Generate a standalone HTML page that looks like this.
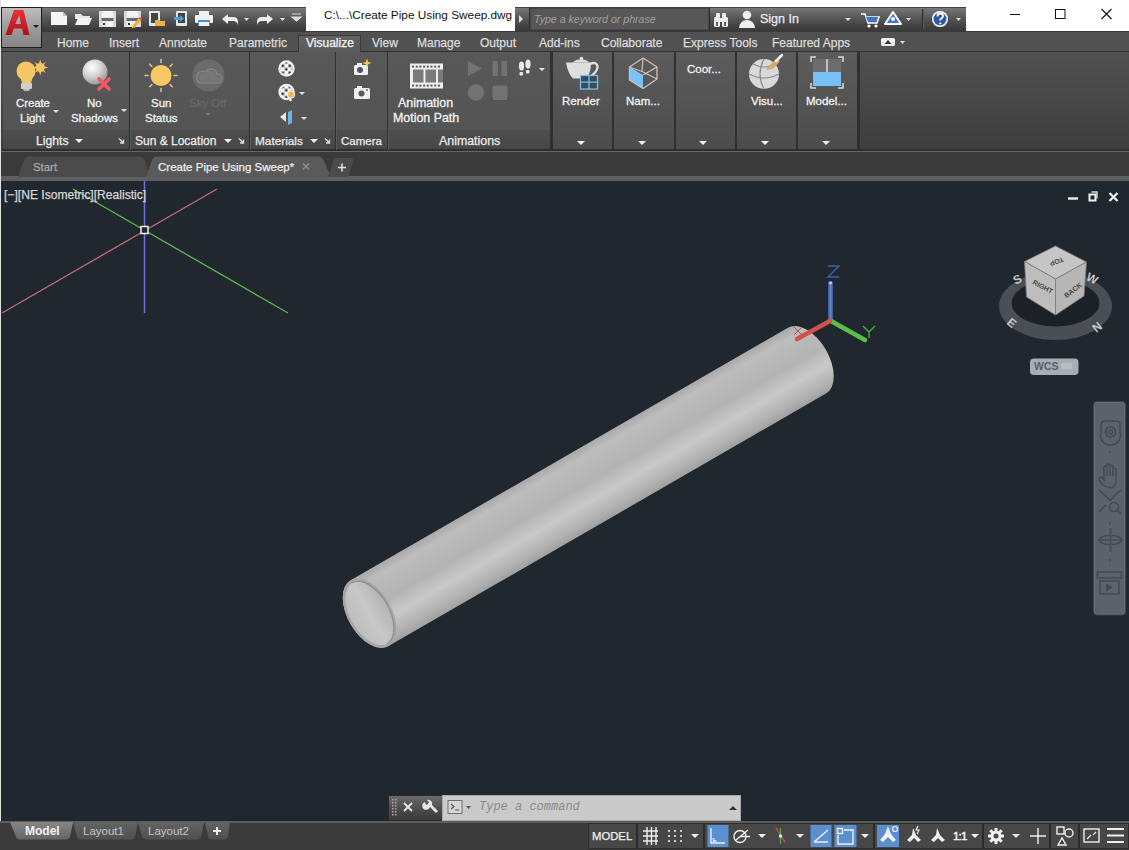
<!DOCTYPE html>
<html><head><meta charset="utf-8">
<style>
*{margin:0;padding:0;box-sizing:border-box}
html,body{width:1129px;height:850px;overflow:hidden;background:#fff;font-family:"Liberation Sans",sans-serif;position:relative}
.a{position:absolute}
.t{position:absolute;white-space:nowrap;color:#ececec;font-size:12px;line-height:14px;-webkit-text-stroke:0.25px currentColor}
svg{position:absolute;overflow:visible}
#qat{left:0;top:7px;width:306px;height:24px;background:linear-gradient(#787878,#555 45%,#383838 100%);border-top:1px solid #444}
#appbtn{left:1px;top:7px;width:41px;height:41px;background:linear-gradient(#bdbdbd,#9c9c9c 50%,#858585);border:1px solid #1e1e1e}
#search{left:515px;top:7px;width:451px;height:24px;background:linear-gradient(#787878,#555 45%,#383838);border-top:1px solid #444}
#tabs{left:0;top:31px;width:1129px;height:22px;background:#515151;border-top:1px solid #3a3a3a;border-bottom:2px solid #333}
#acttab{left:298px;top:35px;width:63px;height:18px;background:linear-gradient(#626262,#5a5a5a);border:1px solid #3a3a3a;border-bottom:none}
#ribbon{left:0;top:52px;width:1129px;height:100px;background:linear-gradient(#505050,#3e3e3e);border-bottom:1px solid #5a5a5a}
#ftabs{left:0;top:152px;width:1129px;height:26px;background:#3a3a3a}
#fstrip{left:0;top:176px;width:1129px;height:5px;background:#5c5e62}
#vp{left:0;top:181px;width:1129px;height:641px;background:#21272f}
#status{left:0;top:821px;width:1129px;height:29px;background:#3b3b3b}
.pnl{position:absolute;top:52px;height:97px;background:linear-gradient(#585858,#535353)}
.pt{position:absolute;top:130px;height:19px;background:linear-gradient(#4e4e4e,#474747)}
.sep{position:absolute;top:52px;width:2px;height:98px;background:linear-gradient(90deg,#2f2f2f 50%,#5a5a5a 50%)}
.cp{position:absolute;top:52px;height:97px;width:59px;background:linear-gradient(#5c5c5c,#4c4c4c)}
.tab{position:absolute;top:35.5px;color:#dcdcdc;font-size:12px;line-height:14px;white-space:nowrap;-webkit-text-stroke:0.25px currentColor}
.rt{position:absolute;white-space:nowrap;color:#f2f2f2;font-size:11.5px;line-height:15px;text-align:center;-webkit-text-stroke:0.3px currentColor;margin-top:0.5px}
.dd{position:absolute;width:0;height:0;border-left:4px solid transparent;border-right:4px solid transparent;border-top:4px solid #f0f0f0}
.dds{position:absolute;width:0;height:0;border-left:3px solid transparent;border-right:3px solid transparent;border-top:3px solid #e0e0e0}
</style></head><body>
<!-- ===== TITLE BAR ===== -->
<div id="qat" class="a"></div>
<div id="search" class="a"></div>
<div class="t" style="left:324px;top:8px;color:#111;font-size:11.8px;line-height:15px;-webkit-text-stroke:0">C:\...\Create Pipe Using Sweep.dwg</div>
<!-- ===== TABS ===== -->
<div id="tabs" class="a"></div>
<div id="acttab" class="a"></div>
<div class="tab" style="left:57px">Home</div>
<div class="tab" style="left:109px">Insert</div>
<div class="tab" style="left:159px">Annotate</div>
<div class="tab" style="left:229px">Parametric</div>
<div class="tab" style="left:306px;color:#f4f4f4">Visualize</div>
<div class="tab" style="left:372px">View</div>
<div class="tab" style="left:417px">Manage</div>
<div class="tab" style="left:480px">Output</div>
<div class="tab" style="left:539px">Add-ins</div>
<div class="tab" style="left:601px">Collaborate</div>
<div class="tab" style="left:683px">Express Tools</div>
<div class="tab" style="left:772px">Featured Apps</div>
<!-- ===== RIBBON ===== -->
<div id="ribbon" class="a"></div>
<div class="a" style="left:0;top:149px;width:1129px;height:1.5px;background:#2e2e2e"></div>
<div class="a" style="left:0;top:150.5px;width:1129px;height:1.5px;background:#666"></div>
<!-- expanded panels -->
<div class="pnl" style="left:3px;width:548px"></div>
<div class="pt" style="left:3px;width:548px"></div>
<div class="sep" style="left:129px"></div>
<div class="sep" style="left:249px"></div>
<div class="sep" style="left:335px"></div>
<div class="sep" style="left:387px"></div>
<div class="a" style="left:551px;top:52px;width:2px;height:98px;background:#2f2f2f"></div>
<!-- collapsed panels -->
<div class="a" style="left:550px;top:52px;width:310px;height:98px;background:#303030"></div>
<div class="cp" style="left:552.5px"></div>
<div class="cp" style="left:614px;width:59.5px"></div>
<div class="cp" style="left:676px;width:58.5px"></div>
<div class="cp" style="left:737px;width:58.5px"></div>
<div class="cp" style="left:798px;width:59px"></div>
<div class="a" style="left:857px;top:52px;width:2px;height:98px;background:#2f2f2f"></div>
<!-- Lights panel -->
<svg style="left:0;top:0" width="1" height="1">
  <!-- bulb -->
  <circle cx="26" cy="71" r="9.5" fill="#f5c765"/>
  <path d="M20 76 L22 83 L31 83 L33 76 Z" fill="#f5c765"/>
  <rect x="21" y="83" width="11" height="6" rx="1" fill="#cfcfcf"/>
  <path d="M23 89 h7 l-1 2 h-5z" fill="#bbb"/>
  <g fill="#f5c765" transform="translate(40.2,67.5)">
    <circle r="4.5"/>
    <path d="M0 -8 L1.5 -3 L-1.5 -3Z M0 8 L1.5 3 L-1.5 3Z M-8 0 L-3 1.5 L-3 -1.5Z M8 0 L3 1.5 L3 -1.5Z M-5.6 -5.6 L-1.5 -3 L-3 -1.5Z M5.6 5.6 L1.5 3 L3 1.5Z M5.6 -5.6 L3 -1.5 L1.5 -3Z M-5.6 5.6 L-3 1.5 L-1.5 3Z"/>
  </g>
  <!-- no shadows sphere -->
  <defs>
    <radialGradient id="sph" cx="0.38" cy="0.32" r="0.7">
      <stop offset="0" stop-color="#ffffff"/><stop offset="0.5" stop-color="#d6d6d6"/><stop offset="1" stop-color="#9a9a9a"/>
    </radialGradient>
  </defs>
  <circle cx="95" cy="72" r="12.5" fill="url(#sph)"/>
  <path d="M99 79 L109 89 M109 79 L99 89" stroke="#ee5a64" stroke-width="3.6" stroke-linecap="round"/>
  <!-- sun status -->
  <g transform="translate(161,75.5)">
    <circle r="10.5" fill="#f9c864"/>
    <g stroke="#d9c080" stroke-width="1.6" stroke-linecap="round">
      <path d="M0 -16 v3 M0 13 v3 M-16 0 h3 M13 0 h3 M-11.3 -11.3 l2.2 2.2 M9.1 9.1 l2.2 2.2 M11.3 -11.3 l-2.2 2.2 M-9.1 9.1 l-2.2 2.2"/>
    </g>
  </g>
  <!-- sky off -->
  <circle cx="208.5" cy="75.5" r="16" fill="#6b6b6b"/>
  <path d="M200 83 h17 a4.5 4.5 0 0 0 0 -9 a6 6 0 0 0 -11 -2 a5 5 0 0 0 -6 11z" fill="none" stroke="#838383" stroke-width="1.6"/>
  <path d="M201 82 h15 a3.5 3.5 0 0 0 0 -7 a5 5 0 0 0 -9.5 -1.5 a4 4 0 0 0 -5.5 8.5z" fill="#777"/>
</svg>
<div class="rt" style="left:16px;top:95px;font-size:11.3px">Create</div>
<div class="rt" style="left:20px;top:110px;font-size:11.5px">Light</div>
<div class="dds" style="left:53px;top:110px"></div>
<div class="rt" style="left:87px;top:95px;font-size:11.5px">No</div>
<div class="rt" style="left:71px;top:110px;font-size:11.4px">Shadows</div>
<div class="dds" style="left:121px;top:109px"></div>
<div class="rt" style="left:151px;top:95px;font-size:11.5px">Sun</div>
<div class="rt" style="left:145px;top:110px;font-size:11.5px">Status</div>
<div class="rt" style="left:189px;top:95px;font-size:11.5px;color:#6a6a6a;-webkit-text-stroke:0">Sky Off</div>
<div class="dds" style="left:205px;top:113px;border-top-color:#777"></div>
<div class="t" style="left:36px;top:134px;font-size:12.2px">Lights</div>
<div class="dd" style="left:75px;top:139px"></div>
<svg style="left:0;top:0" width="1" height="1"><path d="M119 138.5 L123.5 143 M123.5 139.5 V143 H120" stroke="#ddd" stroke-width="1.3" fill="none"/></svg>
<div class="t" style="left:135px;top:134px;font-size:12px">Sun &amp; Location</div>
<div class="dd" style="left:224px;top:139px"></div>
<svg style="left:0;top:0" width="1" height="1"><path d="M239 138.5 L243.5 143 M243.5 139.5 V143 H240" stroke="#ddd" stroke-width="1.3" fill="none"/></svg>
<div class="t" style="left:255px;top:134px;font-size:11.8px">Materials</div>
<div class="dd" style="left:310px;top:139px"></div>
<svg style="left:0;top:0" width="1" height="1"><path d="M325 138.5 L329.5 143 M329.5 139.5 V143 H326" stroke="#ddd" stroke-width="1.3" fill="none"/></svg>
<div class="t" style="left:341px;top:134px;font-size:11.5px">Camera</div>
<div class="t" style="left:439px;top:134px;font-size:12.4px">Animations</div>
<div class="rt" style="left:398px;top:95px;font-size:12.4px">Animation</div>
<div class="rt" style="left:393px;top:110px;font-size:12.4px">Motion Path</div>
<div class="rt" style="left:562px;top:93px;font-size:11.5px">Render</div>
<div class="rt" style="left:626px;top:93px;font-size:11.5px">Nam...</div>
<div class="rt" style="left:687px;top:61px;font-size:11.5px">Coor...</div>
<div class="rt" style="left:751px;top:93px;font-size:11.5px">Visu...</div>
<div class="rt" style="left:806px;top:93px;font-size:11.5px">Model...</div>
<div class="dd" style="left:577px;top:141px"></div>
<div class="dd" style="left:638px;top:141px"></div>
<div class="dd" style="left:699px;top:141px"></div>
<div class="dd" style="left:761px;top:141px"></div>
<div class="dd" style="left:822px;top:141px"></div>
<!-- materials / camera / animation / collapsed icons -->
<svg style="left:0;top:0" width="1" height="1">
  <defs>
    <pattern id="chk" width="7" height="7" patternUnits="userSpaceOnUse" x="0.5" y="0.5"><rect width="7" height="7" fill="#f2f2f2"/><rect x="1" y="1" width="2.6" height="2.6" fill="#333"/><rect x="4.5" y="4.5" width="2.6" height="2.6" fill="#333"/></pattern>
  </defs>
  <circle cx="286.5" cy="68.5" r="8.2" fill="#f0f0f0"/>
  <circle cx="286.5" cy="68.5" r="6" fill="url(#chk)"/>
  <circle cx="286.5" cy="92" r="8.2" fill="#f0f0f0"/>
  <circle cx="286.5" cy="92" r="6" fill="url(#chk)"/>
  <circle cx="291" cy="94.5" r="3.5" fill="#f3b64a" stroke="#f0f0f0" stroke-width="1.2"/>
  <circle cx="290.5" cy="100" r="1.4" fill="#eee"/>
  <path d="M280 117 L286 112 L286 122 Z" fill="#e6e6e6"/>
  <path d="M288 112 L292 110 L292 123 L288 125 Z" fill="#6cb6e6"/>
  <!-- camera icons -->
  <rect x="354" y="65" width="14" height="10" rx="1.5" fill="#f0f0f0"/>
  <rect x="357" y="63" width="5" height="3" fill="#f0f0f0"/>
  <circle cx="360" cy="70" r="3" fill="#4c5470"/>
  <path d="M367 58.5 L368.2 62 L371.5 63 L368.2 64.2 L367 67.5 L365.8 64.2 L362.5 63 L365.8 62 Z" fill="#f3c85a"/>
  <rect x="354" y="88" width="16" height="11" rx="1.5" fill="#f0f0f0"/>
  <rect x="357" y="86" width="5" height="3" fill="#f0f0f0"/>
  <circle cx="361.5" cy="93.5" r="3" fill="#5a5a5a"/>
  <circle cx="367" cy="90" r="0.9" fill="#5a5a5a"/>
  <!-- film strip -->
  <rect x="410" y="63.5" width="33" height="25" fill="#efefef"/>
  <rect x="413" y="69.5" width="10.5" height="13" fill="#7a7a7a"/>
  <rect x="425.5" y="69.5" width="10.5" height="13" fill="#7a7a7a"/>
  <rect x="438" y="69.5" width="5" height="13" fill="#7a7a7a"/>
  <g fill="#5a5a5a"><rect x="412.0" y="65.6" width="2" height="2"/><rect x="415.7" y="65.6" width="2" height="2"/><rect x="419.4" y="65.6" width="2" height="2"/><rect x="423.1" y="65.6" width="2" height="2"/><rect x="426.8" y="65.6" width="2" height="2"/><rect x="430.5" y="65.6" width="2" height="2"/><rect x="434.2" y="65.6" width="2" height="2"/><rect x="437.9" y="65.6" width="2" height="2"/><rect x="412.0" y="84.6" width="2" height="2"/><rect x="415.7" y="84.6" width="2" height="2"/><rect x="419.4" y="84.6" width="2" height="2"/><rect x="423.1" y="84.6" width="2" height="2"/><rect x="426.8" y="84.6" width="2" height="2"/><rect x="430.5" y="84.6" width="2" height="2"/><rect x="434.2" y="84.6" width="2" height="2"/><rect x="437.9" y="84.6" width="2" height="2"/></g>
  <!-- play/pause/record/stop (disabled) -->
  <path d="M468 61 L482 68.5 L468 76 Z" fill="#727272"/>
  <rect x="492.5" y="61" width="5.5" height="15" rx="1" fill="#727272"/>
  <rect x="501.5" y="61" width="5.5" height="15" rx="1" fill="#727272"/>
  <circle cx="476" cy="92.5" r="8.2" fill="#727272"/>
  <rect x="492.5" y="85.5" width="15" height="14.5" rx="2" fill="#727272"/>
  <!-- footsteps -->
  <g fill="#eaeaea">
    <ellipse cx="521.5" cy="66" rx="2.6" ry="4.5"/><rect x="519.5" y="72" width="3.5" height="3.5" rx="1"/>
    <ellipse cx="528" cy="64" rx="2.6" ry="4.5"/><rect x="526" y="70" width="3.5" height="3.5" rx="1"/>
  </g>
  <path d="M539 68 h6 l-3 3z" fill="#eee"/>
  <!-- render teapot -->
  <path d="M566 62.5 L591 62.5 Q591 74 586 78.5 L573 78.5 Q568 74 566 62.5 Z" fill="#dedede"/>
  <path d="M590 64 Q597 61 597.5 67 Q597 73 589 77" fill="none" stroke="#dedede" stroke-width="2.4"/>
  <path d="M572 62.5 Q581 56 590 62.5 Z" fill="#dedede"/>
  <circle cx="581.5" cy="58.5" r="1.8" fill="#dedede"/>
  <rect x="580.5" y="75.5" width="17" height="13.5" fill="#3d4a56" stroke="#6ec0f0" stroke-width="1.3"/>
  <path d="M589 75.5 V89 M580.5 82.2 H597.5" stroke="#6ec0f0" stroke-width="1.3"/>
  <!-- named views cube -->
  <path d="M629.5 67 L643 75 L643 88.5 L629.5 80 Z" fill="#76c4f6"/>
  <path d="M643 58 L657 67 L657 79 L643 88.5 L629.5 80 L629.5 67 Z" fill="none" stroke="#d0c0b4" stroke-width="1.3"/>
  <path d="M643 58 L642 71.5 M629.5 67 L642 71.5 M642 71.5 L657 79 M643 75 L657 67" fill="none" stroke="#d0c0b4" stroke-width="1.2"/>
  <!-- visual styles globe -->
  <circle cx="764" cy="74" r="15" fill="#d9d9d9"/>
  <path d="M749 74 Q764 82 779 74 M764 59 Q756 74 764 89 M753 64 Q764 70 775 64" fill="none" stroke="#888" stroke-width="1.2"/>
  <path d="M770 65 L776 59 L780 61 L774 68 Q768 71 766 69 Z" fill="#d9a870"/>
  <path d="M776 61 L782 55" stroke="#f0f0f0" stroke-width="2.5" stroke-linecap="round"/>
  <!-- model viewports -->
  <rect x="813" y="59" width="28" height="27" fill="#6d6d6d"/>
  <rect x="813" y="72" width="28" height="14" fill="#76c0f6"/>
  <path d="M827 59 V72" stroke="#dcdcdc" stroke-width="1.5"/>
  <path d="M811 62 V57 H816 M838 57 H843 V62 M811 83 V88 H816 M838 88 H843 V83" stroke="#dcdcdc" stroke-width="1.5" fill="none"/>
</svg>
<div class="dds" style="left:299px;top:92px"></div>
<div class="dds" style="left:301px;top:117px"></div>
<div id="appbtn" class="a"></div>
<svg style="left:0;top:0" width="1" height="1">
  <defs>
    <linearGradient id="ared" x1="0" y1="0" x2="0" y2="1"><stop offset="0" stop-color="#e8323a"/><stop offset="1" stop-color="#b0121c"/></linearGradient>
  </defs>
  <!-- A logo -->
  <path d="M5.5 35 L14 10 L23.5 10 L29.5 35 L23.5 35 L22 28.5 L13.8 28.5 L11.5 35 Z M15.3 24 L21 24 L19.2 15 Z" fill="url(#ared)" fill-rule="evenodd"/>
  <path d="M33 25 h6 l-3 3z" fill="#1a1a1a"/>
  <!-- new -->
  <path d="M51 12 h12 l4 4 v9 h-16z" fill="#f4f4f4"/>
  <path d="M63 12 v4 h4" fill="#bbb"/>
  <!-- open -->
  <path d="M75 14 h6 l2 2 h7 v3 h-15z" fill="#e8e8e8"/>
  <path d="M75 25 l3 -7 h14 l-3 7z" fill="#f4f4f4"/>
  <!-- save -->
  <path d="M99 11 h17 v16 h-17z" fill="#d8d8d8"/>
  <rect x="102" y="11" width="11" height="6.5" fill="#f4f4f4"/>
  <rect x="101.5" y="18" width="12" height="3" fill="#6a6a6a"/>
  <rect x="102" y="21.5" width="11" height="5" fill="#f4f4f4"/>
  <rect x="103" y="23" width="2" height="2" fill="#333"/>
  <!-- save as -->
  <path d="M124 11 h17 v16 h-17z" fill="#d8d8d8"/>
  <rect x="127" y="11" width="11" height="6.5" fill="#f4f4f4"/>
  <rect x="126.5" y="18" width="12" height="3" fill="#6a6a6a"/>
  <rect x="127" y="21.5" width="11" height="5" fill="#f4f4f4"/>
  <rect x="128" y="23" width="2" height="2" fill="#333"/>
  <path d="M132 26 l7 -8 l2.5 2.5 l-7 7.5 h-2.5z" fill="#e8b040"/>
  <path d="M140 17 l2 2 l-1.2 1.2 l-2 -2z" fill="#e44"/>
  <!-- open from web -->
  <rect x="149" y="11" width="11" height="15" rx="1" fill="#e6e6e6"/>
  <rect x="151" y="13" width="7" height="10" fill="#444"/>
  <path d="M155 20 h4 l1 1 h5 v5 h-10z" fill="#f0b040"/>
  <!-- save to web -->
  <rect x="176" y="11" width="11" height="15" rx="1" fill="#e6e6e6"/>
  <rect x="178" y="13" width="7" height="10" fill="#444"/>
  <path d="M174 17 h6 v-2 l4 3.5 l-4 3.5 v-2 h-6z" fill="#4aa0e0"/>
  <!-- plot -->
  <rect x="199" y="11" width="10" height="4" fill="#f0f0f0"/>
  <rect x="195" y="15" width="18" height="8" rx="1" fill="#f0f0f0"/>
  <rect x="198" y="20" width="12" height="6" fill="#4a90d0"/>
  <rect x="199" y="22" width="10" height="4" fill="#f0f0f0"/>
  <!-- undo -->
  <path d="M222 19 l6 -5 v3 h5 q5 0 5 5 v3 q-1 -4 -5 -4 h-5 v3z" fill="#f0f0f0"/>
  <path d="M244 18 h5 l-2.5 3z" fill="#ddd"/>
  <!-- redo -->
  <path d="M273 19 l-6 -5 v3 h-5 q-5 0 -5 5 v3 q1 -4 5 -4 h5 v3z" fill="#f0f0f0"/>
  <path d="M280 18 h5 l-2.5 3z" fill="#ddd"/>
  <!-- customize -->
  <path d="M292 14 h9 M292 17 h9 l-4.5 4z" stroke="#ddd" stroke-width="1.2" fill="#ddd"/>
  <!-- search triangle -->
  <rect x="529" y="8" width="1" height="22" fill="#2a2a2a"/>
  <path d="M519 15 l4 4 l-4 4z" fill="#e0e0e0"/>
  <rect x="530" y="8" width="179" height="22" fill="#575757" stroke="#3a3a3a"/>
  <rect x="709" y="8" width="1" height="22" fill="#2a2a2a"/>
  <!-- binoculars -->
  <g fill="#ececec">
    <rect x="716" y="13" width="4" height="5" rx="1"/><rect x="722" y="13" width="4" height="5" rx="1"/>
    <rect x="714" y="17" width="6" height="10" rx="1.5"/><rect x="722" y="17" width="6" height="10" rx="1.5"/>
    <rect x="719" y="18" width="4" height="4"/>
  </g>
  <rect x="716" y="22" width="2" height="4" fill="#666"/><rect x="724" y="22" width="2" height="4" fill="#666"/>
  <!-- user -->
  <circle cx="747" cy="15" r="4.3" fill="#efefef"/>
  <path d="M739 28 q1 -8 8 -8 q7 0 8 8z" fill="#efefef"/>
  <path d="M845 18 h6 l-3 3z" fill="#ddd"/>
  <!-- cart -->
  <path d="M861 14 h4 l3 9 h9 l2 -6 h-12" stroke="#fff" stroke-width="1.6" fill="none"/>
  <path d="M866 17 h12 l-2 5 h-8z" fill="#3b78c8"/>
  <circle cx="869" cy="26" r="1.6" fill="#fff"/><circle cx="876" cy="26" r="1.6" fill="#fff"/>
  <!-- a360 -->
  <path d="M893 12 l8 12 h-16z" stroke="#fff" stroke-width="2" fill="#3b78c8" stroke-linejoin="round"/>
  <circle cx="893" cy="19" r="2" fill="#fff"/>
  <path d="M906 18 h5 l-2.5 3z" fill="#ddd"/>
  <rect x="922" y="9" width="1" height="20" fill="#2b2b2b"/><rect x="923" y="9" width="1" height="20" fill="#5d5d5d"/>
  <!-- help -->
  <circle cx="940" cy="19" r="8" fill="#fff"/>
  <circle cx="940" cy="19" r="6.5" fill="#2a5aa8"/>
  <path d="M937.5 16.5 q0 -3 2.7 -3 q2.8 0 2.8 2.6 q0 1.6 -2 2.6 q-0.8 0.5 -0.8 1.8" stroke="#fff" stroke-width="1.8" fill="none"/>
  <circle cx="940.2" cy="23.5" r="1.1" fill="#fff"/>
  <path d="M956 18 h5 l-2.5 3z" fill="#ddd"/>
  <!-- window controls -->
  <path d="M1010 14.5 h10" stroke="#111" stroke-width="1"/>
  <rect x="1055.5" y="9.5" width="9.5" height="9" fill="none" stroke="#111" stroke-width="1"/>
  <path d="M1101.5 9 l10 10 M1111.5 9 l-10 10" stroke="#111" stroke-width="1.1"/>
  <!-- tab row icon -->
  <rect x="881" y="38" width="14" height="8" rx="1.5" fill="#f0f0f0"/>
  <path d="M884.5 44 l3.5 -4 l3.5 4z" fill="#333"/>
  <path d="M900 41 h5 l-2.5 3z" fill="#ddd"/>
</svg>
<div class="t" style="left:534px;top:12px;font-size:10.6px;font-style:italic;color:#a0a0a0;-webkit-text-stroke:0">Type a keyword or phrase</div>
<div class="t" style="left:760px;top:12px;font-size:12.5px;color:#ececec">Sign In</div>
<!-- ===== FILE TABS ===== -->
<div id="ftabs" class="a"></div>
<div id="fstrip" class="a"></div>
<svg style="left:0;top:0" width="1" height="1">
  <path d="M18 177 L24 160 Q25.5 156.5 29 156.5 L139 156.5 Q143 156.5 144.5 160 L151 177 Z" fill="#4b4b4b"/>
  <path d="M146 177 L152 160 Q153.5 156.5 157 156.5 L318 156.5 Q322 156.5 323.5 160 L331 177 Z" fill="#5a5a5a"/>
  <path d="M328 177 L333 161 Q334 158 337 158 L350 158 Q354 158 353 161 L348 177 Z" fill="#4b4b4b"/>
  <path d="M338 167.5 h8 M342 163.5 v8" stroke="#e0e0e0" stroke-width="1.6"/>
  <path d="M303 163.5 l6 6 M309 163.5 l-6 6" stroke="#8a8a8a" stroke-width="1.6"/>
</svg>
<div class="t" style="left:33px;top:160px;font-size:11.4px;color:#a8a8a8">Start</div>
<div class="t" style="left:158px;top:160px;font-size:11.5px;color:#ececec">Create Pipe Using Sweep*</div>
<!-- ===== VIEWPORT ===== -->
<div id="vp" class="a"></div>
<svg style="left:0;top:0" width="1" height="1">
  <defs>
    <linearGradient id="pipeg" gradientUnits="userSpaceOnUse" x1="0" y1="-38" x2="0" y2="38">
      <stop offset="0" stop-color="#a9a9a9"/>
      <stop offset="0.12" stop-color="#bdbdbd"/>
      <stop offset="0.45" stop-color="#b4b4b4"/>
      <stop offset="0.68" stop-color="#c9c9c9"/>
      <stop offset="0.9" stop-color="#b0b0b0"/>
      <stop offset="1" stop-color="#a0a0a0"/>
    </linearGradient>
    <linearGradient id="holeg" gradientUnits="userSpaceOnUse" x1="-20" y1="0" x2="20" y2="0">
      <stop offset="0" stop-color="#bdbdbd"/>
      <stop offset="0.5" stop-color="#c8c8c8"/>
      <stop offset="1" stop-color="#b4b4b4"/>
    </linearGradient>
  </defs>
  <!-- UCS-like axes at top-left -->
  <path d="M2 313 L217 189" stroke="#c26a7a" stroke-width="1.3"/>
  <path d="M73 189 L288 313" stroke="#5fb84a" stroke-width="1.3"/>
  <path d="M144.5 181 V313" stroke="#6a72e0" stroke-width="1.5"/>
  <rect x="141" y="226.5" width="7" height="7" fill="#21272f" stroke="#fff" stroke-width="1.4"/>
  <!-- pipe -->
  <g transform="translate(369.6,613.2) rotate(-30)">
    <path d="M0 -38 L505 -38 A21.9 38 0 0 1 505 38 L0 38 A21.9 38 0 0 1 0 -38 Z" fill="url(#pipeg)"/>
    <ellipse cx="0" cy="0" rx="21.9" ry="38" fill="#a6a6a6"/>
    <ellipse cx="0" cy="0" rx="19.5" ry="35" fill="url(#holeg)"/>
    <path d="M0 -35 A19.5 35 0 0 1 0 35" fill="none" stroke="#8e8e8e" stroke-width="1.2"/>
  </g>
  <!-- UCS icon at pipe -->
  <path d="M830.5 283 V320" stroke="#4d6db8" stroke-width="4.6" stroke-linecap="round"/>
  <path d="M830.5 284 V318" stroke="#6585cc" stroke-width="1.4"/>
  <circle cx="830.5" cy="283" r="1.3" fill="#dce6ff"/>
  <path d="M831 321 L865 340" stroke="#58c048" stroke-width="4.6" stroke-linecap="round"/>
  <path d="M830 321 L797 339" stroke="#d0524e" stroke-width="4.6" stroke-linecap="round"/>
  <path d="M828 266 h11 l-11 11 h11" stroke="#3d60b0" stroke-width="1.4" fill="none"/>
  <path d="M863 326 l6 6 l6 -6 M869 332 v6" stroke="#4fb040" stroke-width="1.3" fill="none"/>
  <path d="M794 327 l8 8 M802 327 l-8 8" stroke="#b05050" stroke-width="1" fill="none"/>
</svg>
<div class="t" style="left:4px;top:188px;font-size:12.1px;color:#d8d8d8">[−][NE Isometric][Realistic]</div>
<svg style="left:0;top:0" width="1" height="1">
  <!-- viewport controls -->
  <path d="M1068 198.5 h10" stroke="#f0f0f0" stroke-width="2.4"/>
  <path d="M1091.5 192 h5.5 v6.5" fill="none" stroke="#d8d8d8" stroke-width="1.4"/>
  <rect x="1089.5" y="194.5" width="6" height="6" fill="#21272f" stroke="#f4f4f4" stroke-width="2"/>
  <path d="M1109.5 193 l8 8 M1117.5 193 l-8 8" stroke="#f4f4f4" stroke-width="2.2"/>
  <!-- compass -->
  <ellipse cx="1055.5" cy="306" rx="56.5" ry="34" fill="#4a4f56"/>
  <ellipse cx="1055.5" cy="303" rx="44" ry="23.5" fill="#1c2127"/>
  <g fill="#c4c4c4" font-family="Liberation Sans" font-weight="bold" font-size="12">
    <text x="1013" y="283" transform="rotate(-25 1018 278)">S</text>
    <text x="1087" y="283" transform="rotate(28 1093 278)">W</text>
    <text x="1008" y="328" transform="rotate(40 1013 323)">E</text>
    <text x="1092" y="331" transform="rotate(-38 1097 326)">N</text>
  </g>
  <!-- cube -->
  <path d="M1024.5 261.5 L1055.5 246 L1086.5 262 L1055.5 279 Z" fill="#c6c6c6" stroke="#7a7a7a" stroke-width="0.8"/>
  <path d="M1024.5 261.5 L1055.5 279 L1055.5 315 L1026.5 297 Z" fill="#bdbdbd" stroke="#7a7a7a" stroke-width="0.8"/>
  <path d="M1055.5 279 L1086.5 262 L1084 296 L1055.5 315 Z" fill="#b6b6b6" stroke="#7a7a7a" stroke-width="0.8"/>
  <g fill="#4a4a4a" font-family="Liberation Sans" font-weight="bold">
    <text x="1050" y="265" font-size="7" transform="rotate(160 1057 262)">TOP</text>
    <text x="1031" y="288" font-size="7" transform="rotate(28 1040 288)">RIGHT</text>
    <text x="1063" y="294" font-size="7" transform="rotate(-38 1071 291)">BACK</text>
  </g>
  <!-- WCS -->
  <rect x="1030" y="358.5" width="48.5" height="16.5" rx="4" fill="#a7adb5"/>
  <text x="1034" y="370" font-family="Liberation Sans" font-weight="bold" font-size="10.5" fill="#5a5f67">WCS</text>
  <rect x="1061" y="363" width="11" height="6" rx="1" fill="#b9bec5"/>
  <!-- nav bar -->
  <rect x="1093.5" y="401.5" width="32" height="213.5" rx="3.5" fill="#5c6269" stroke="#3f444b" stroke-width="1"/>
  <rect x="1094.5" y="402.5" width="30" height="211.5" rx="3" fill="none" stroke="#6a7078" stroke-width="0.8"/>
  <g fill="none" stroke="#454a52" stroke-width="1.5">
    <path d="M1101 425 Q1101 421 1105 421 H1117 Q1120 421 1120 425 V432 A10 10 0 1 1 1101 432 Z"/>
    <circle cx="1110.5" cy="432" r="5"/>
    <circle cx="1110.5" cy="432" r="2"/>
    <path d="M1110 450.5 v2.5 M1110 522 v2.5 M1110 559 v2.5"/>
    <path d="M1104 486 q-4 -3 -5 -8 l3 -1 l2 3 v-13 q1.5 -2 3 0 v9 v-11 q1.5 -2 3 0 v11 v-10 q1.5 -2 3 0 v10 v-7 q1.5 -2 3 0 v10 q0 6 -4 9z"/>
    <path d="M1099 490 l12 11 M1121 490 l-12 11 M1099 512 l7 -7"/>
    <circle cx="1114" cy="507" r="4.5"/>
    <path d="M1117 510 l4 4" stroke-width="2"/>
    <path d="M1110.5 528 v24 M1098 540 h25"/>
    <ellipse cx="1110.5" cy="540" rx="11" ry="4.5"/>
    <rect x="1097.5" y="572" width="24" height="6"/>
    <rect x="1100" y="581" width="19" height="13"/>
  </g>
  <path d="M1106 583.5 l7 4 l-7 4z" fill="#454a52"/>
</svg>
<!-- left light edge -->
<div class="a" style="left:0;top:0;width:1px;height:850px;background:#e0e0e0"></div>
<!-- ===== STATUS ===== -->
<div id="status" class="a"></div>
<div class="a" style="left:0;top:821px;width:1129px;height:1.5px;background:#5c5c5c"></div>
<!-- command line -->
<div class="a" style="left:388px;top:795px;width:55px;height:26px;background:linear-gradient(#6a6a6a,#4a4a4a 60%,#3a3a3a);border:1px solid #2a2a2a"></div>
<div class="a" style="left:442px;top:795px;width:299px;height:26px;background:#cacaca;border:1px solid #a8a8a8"></div>
<svg style="left:0;top:0" width="1" height="1">
  <g fill="#a8a8a8"><rect x="392" y="799" width="1.5" height="1.5"/><rect x="395" y="799" width="1.5" height="1.5"/><rect x="392" y="802" width="1.5" height="1.5"/><rect x="395" y="802" width="1.5" height="1.5"/><rect x="392" y="805" width="1.5" height="1.5"/><rect x="395" y="805" width="1.5" height="1.5"/><rect x="392" y="808" width="1.5" height="1.5"/><rect x="395" y="808" width="1.5" height="1.5"/><rect x="392" y="811" width="1.5" height="1.5"/><rect x="395" y="811" width="1.5" height="1.5"/><rect x="392" y="814" width="1.5" height="1.5"/><rect x="395" y="814" width="1.5" height="1.5"/></g>
  <path d="M404 803 l8 8 M412 803 l-8 8" stroke="#e6e6e6" stroke-width="1.8"/>
  <path d="M425 802 a4 4 0 1 0 5 5 l6 6 l2 -2 l-6 -6 a4 4 0 0 0 -5 -5 l2 2 l-1 2 l-2 1z" fill="#e6e6e6"/>
  <rect x="448" y="800.5" width="14" height="13" fill="#d6d6d6" stroke="#707070"/>
  <path d="M451 804 l3 2.5 l-3 2.5 M455 810 h4" stroke="#505050" stroke-width="1.1" fill="none"/>
  <path d="M466 806 h5 l-2.5 3z" fill="#555"/>
  <path d="M729 810 h8 l-4 -4z" fill="#333"/>
</svg>
<div class="t" style="left:479px;top:800px;font-family:'Liberation Mono',monospace;font-style:italic;font-size:12px;color:#8a8a8a;-webkit-text-stroke:0">Type a command</div>
<!-- layout tabs -->
<svg style="left:0;top:0" width="1" height="1">
  <defs><linearGradient id="mtab" x1="0" y1="0" x2="0" y2="1"><stop offset="0" stop-color="#858585"/><stop offset="1" stop-color="#656565"/></linearGradient>
  <linearGradient id="ltab" x1="0" y1="0" x2="0" y2="1"><stop offset="0" stop-color="#636363"/><stop offset="1" stop-color="#505050"/></linearGradient></defs>
  <path d="M10 822 L16 837 Q17 839.5 20 839.5 L66 839.5 Q69 839.5 70 837 L73 822 Z" fill="url(#mtab)"/>
  <path d="M73 822 L77 837 Q78 839.5 81 839.5 L131 839.5 Q134 839.5 135 837 L138 822 Z" fill="url(#ltab)"/>
  <path d="M138 822 L142 837 Q143 839.5 146 839.5 L197 839.5 Q200 839.5 201 837 L204 822 Z" fill="url(#ltab)"/>
  <path d="M205 822 L208 837 Q209 839.5 212 839.5 L224 839.5 Q227 839.5 228 837 L230 822 Z" fill="url(#ltab)"/>
  <path d="M213 831 h8 M217 827 v8" stroke="#eee" stroke-width="2"/>
</svg>
<div class="t" style="left:25px;top:824px;font-size:12px;font-weight:bold;color:#f4f4f4;-webkit-text-stroke:0">Model</div>
<div class="t" style="left:83px;top:824px;font-size:11.5px;color:#c4c4c4;-webkit-text-stroke:0">Layout1</div>
<div class="t" style="left:148px;top:824px;font-size:11.5px;color:#c4c4c4;-webkit-text-stroke:0">Layout2</div>
<!-- status right -->
<svg style="left:0;top:0" width="1" height="1">
  <g fill="#474747" stroke="#2c2c2c" stroke-width="1">
    <rect x="588.5" y="823.5" width="48" height="25"/>
    <rect x="637.5" y="823.5" width="66" height="25"/>
    <rect x="704.5" y="823.5" width="169" height="25"/>
    <rect x="874.5" y="823.5" width="108" height="25"/>
    <rect x="983.5" y="823.5" width="66" height="25"/>
    <rect x="1050.5" y="823.5" width="28" height="25"/>
    <rect x="1079.5" y="823.5" width="49" height="25"/>
  </g>
  <g fill="#5a8fd0">
    <rect x="707.5" y="825" width="21" height="22"/>
    <rect x="810.5" y="825" width="21" height="22"/>
    <rect x="834.5" y="825" width="22" height="22"/>
    <rect x="877" y="825" width="22" height="22"/>
  </g>
  <g stroke="#f0f0f0" stroke-width="1.4" fill="none">
    <!-- grid -->
    <path d="M643 831 h15 M643 836 h15 M643 841 h15 M647 827 v18 M651.5 827 v18 M656 827 v18"/>
    <!-- ortho -->
    <path d="M711 828 v15 h14 M713.5 838 v3 h3"/>
    <!-- polar -->
    <circle cx="740" cy="836.5" r="6"/>
    <path d="M736 840 l12 -10 M740 836.5 h10"/>
    <!-- osnap track -->
    <path d="M814 842 l14 -12 M814 842 h14"/>
    <!-- osnap -->
    <rect x="837.5" y="828.5" width="5" height="5"/>
    <path d="M844 830 h9 v14 h-15 v-9"/>
    <!-- plus -->
    <path d="M1030 836 h16 M1038 828 v16"/>
    <!-- isolate -->
    <rect x="1057" y="827" width="7" height="7"/>
    <circle cx="1069" cy="833" r="4"/>
    <path d="M1058 845 l4 -7 l4 7z"/>
    <!-- fullscreen -->
    <rect x="1084" y="829" width="15" height="13"/>
    <!-- hamburger -->
    <path d="M1107 829 h17 M1107 835.5 h17 M1107 842 h17" stroke-width="2"/>
  </g>
  <path d="M1087 839 l4 -4 M1096 832 l-3 3" stroke="#f0f0f0" stroke-width="1.2"/>
  <g fill="#f0f0f0">
    <circle cx="669" cy="831" r="1"/><circle cx="675" cy="831" r="1"/><circle cx="681" cy="831" r="1"/>
    <circle cx="669" cy="836" r="1"/><circle cx="675" cy="836" r="1"/><circle cx="681" cy="836" r="1"/>
    <circle cx="669" cy="841" r="1"/><circle cx="675" cy="841" r="1"/><circle cx="681" cy="841" r="1"/>
    <path d="M691 834 h8 l-4 4z M758 834 h8 l-4 4z M796 834 h8 l-4 4z M861 834 h8 l-4 4z M971 834 h8 l-4 4z M1012 834 h8 l-4 4z"/>
  </g>
  <path d="M776 828 l9 14" stroke="#d04848" stroke-width="1.4"/>
  <path d="M780.5 828 v16" stroke="#48b048" stroke-width="1.2"/>
  <circle cx="780.5" cy="836" r="1.8" fill="#ddd"/>
  <!-- annotation icons -->
  <g fill="#f0f0f0">
    <path d="M888 826 l3 8 l5 6 l-3 2 l-5 -5 l-5 5 l-3 -2 l5 -6z"/>
    <path d="M913 828 l3 7 l5 5 l-3 2 l-4 -4 l-4 4 l-3 -2 l5 -5z"/>
    <path d="M937 828 l3 7 l5 5 l-3 2 l-4 -4 l-4 4 l-3 -2 l5 -5z"/>
  </g>
  <circle cx="895" cy="829" r="2.5" fill="none" stroke="#f0f0f0" stroke-width="1.2"/>
  <path d="M918 826 l-2 4 h3 l-2 4" stroke="#f0f0f0" stroke-width="1.2" fill="none"/>
  <!-- gear -->
  <g transform="translate(996,836)">
    <circle r="5.5" fill="#f0f0f0"/>
    <g stroke="#f0f0f0" stroke-width="3"><path d="M0 -8 v16 M-8 0 h16 M-5.7 -5.7 l11.4 11.4 M5.7 -5.7 l-11.4 11.4"/></g>
    <circle r="2.5" fill="#474747"/>
  </g>
</svg>
<div class="t" style="left:592px;top:829px;font-size:11.3px;color:#f0f0f0">MODEL</div>
<div class="t" style="left:953px;top:829px;font-size:11.5px;letter-spacing:-0.8px;color:#f0f0f0;-webkit-text-stroke:0.5px currentColor">1:1</div>
</body></html>
